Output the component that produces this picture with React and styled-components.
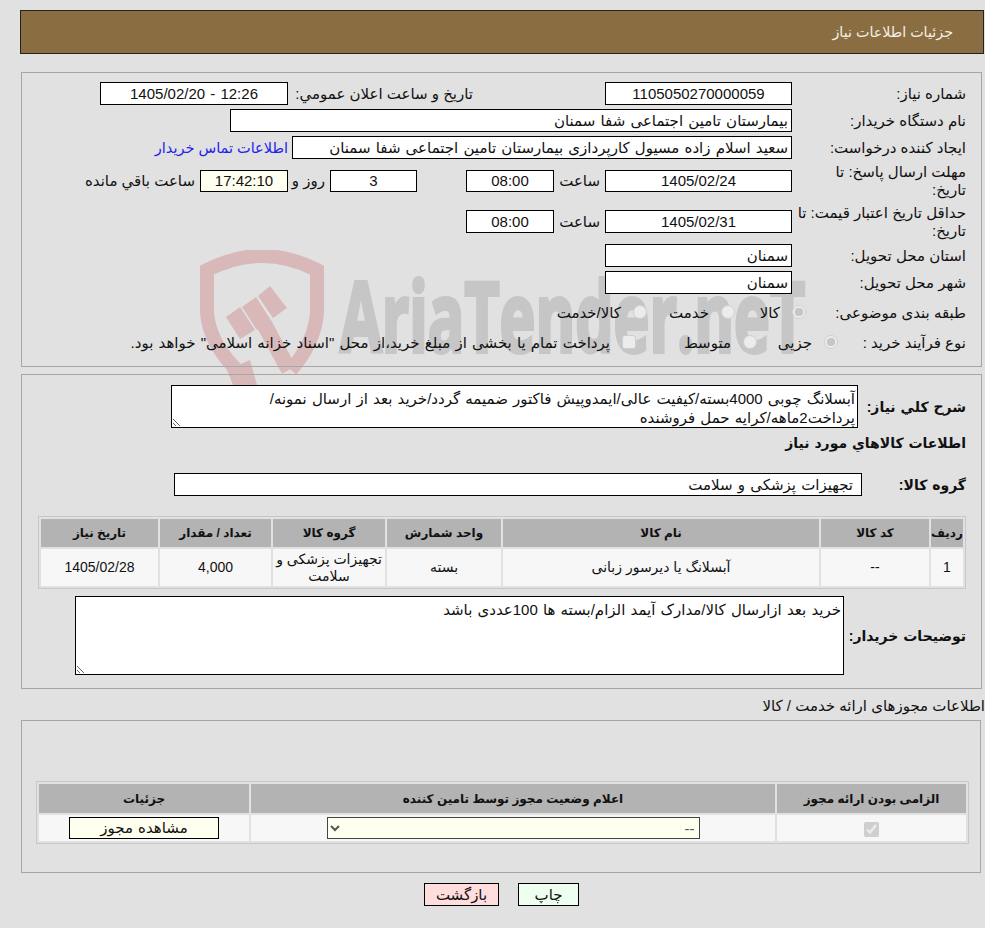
import styled, { createGlobalStyle } from 'styled-components';

const GlobalStyle = createGlobalStyle`
  html, body {
    margin: 0;
    padding: 0;
    background: #e1e1e1;
  }

  body {
    font-family: 'Liberation Sans', 'DejaVu Sans', sans-serif;
    font-size: 15px;
    word-spacing: 1px;
    color: #111;
  }
`;

const columns = [
  { title: 'ردیف', width: 32 },
  { title: 'کد کالا', width: 108 },
  { title: 'نام کالا', width: 316 },
  { title: 'واحد شمارش', width: 114 },
  { title: 'گروه کالا', width: 112 },
  { title: 'تعداد / مقدار', width: 111 },
  { title: 'تاریخ نیاز', width: 117 },
];

const row = ['1', '--', 'آبسلانگ یا دیرسور زبانی', 'بسته', 'تجهیزات پزشکی و سلامت', '4,000', '1405/02/28'];

const Watermark = () => (
  <WatermarkSvg width="640" height="145" viewBox="0 0 640 145">
    <g fill="none" stroke="#d9b8ba">
      <path d="M42 125 Q9 95 7 62 L7 20 Q62 -8 117 20 L117 62 Q115 92 91 120" strokeWidth="14" />
      <path d="M64 74 L89 120" strokeWidth="16" />
    </g>
    <g fill="#d9b8ba">
      <path d="M26 67 L40 57 L55 80 L40 89 Z" />
      <path d="M42 57 L56 47 L72 72 L57 80 Z" />
      <path d="M58 46 L70 36 L87 58 L73 68 Z" />
      <path d="M27 120 L50 110 L57 135 L33 135 Z" />
    </g>
    <text x="140" y="102" fontFamily="'Open Sans', sans-serif" fontWeight="700" fontSize="96" fill="#c6c6c6" stroke="#c6c6c6" strokeWidth="4" textLength="465" lengthAdjust="spacingAndGlyphs">
      AriaTender.neT
    </text>
  </WatermarkSvg>
);

const App = () => {
  return (
    <Page dir="rtl">
      <GlobalStyle />
      <Watermark />
      <Header>جزئیات اطلاعات نیاز</Header>

      <InfoPanel>
        <Row>
          <Label>شماره نیاز:</Label>
          <Box $width={187} $center>1105050270000059</Box>
          <Label $width={180} $before={132} $after={5} $nowrap>تاریخ و ساعت اعلان عمومي:</Label>
          <Box $width={188} $center>12:26 - 1405/02/20</Box>
        </Row>
        <Row>
          <Label>نام دستگاه خریدار:</Label>
          <Box $width={562}>بیمارستان تامین اجتماعی شفا سمنان</Box>
        </Row>
        <Row>
          <Label>ایجاد کننده درخواست:</Label>
          <Box $width={500}>سعید اسلام زاده مسیول کارپردازی بیمارستان تامین اجتماعی شفا سمنان</Box>
          <ContactLink href="#">اطلاعات تماس خریدار</ContactLink>
        </Row>
        <Row $height={36}>
          <Label>مهلت ارسال پاسخ: تا<br />تاریخ:</Label>
          <Box $width={187} $center $short>1405/02/24</Box>
          <Unit $width={51}>ساعت</Unit>
          <Box $width={88} $center $short>08:00</Box>
          <Box $width={87} $center $short $before={49}>3</Box>
          <Unit $width={42}>روز و</Unit>
          <Box $width={88} $center $short $cream>17:42:10</Box>
          <Unit>ساعت باقي مانده</Unit>
        </Row>
        <Row $height={37}>
          <Label>حداقل تاریخ اعتبار قیمت: تا<br />تاریخ:</Label>
          <Box $width={187} $center>1405/02/31</Box>
          <Unit $width={51}>ساعت</Unit>
          <Box $width={88} $center>08:00</Box>
        </Row>
        <Row>
          <Label>استان محل تحویل:</Label>
          <Box $width={187}>سمنان</Box>
        </Row>
        <Row>
          <Label>شهر محل تحویل:</Label>
          <Box $width={187}>سمنان</Box>
        </Row>
        <OptionRow>
          <Label>طبقه بندی موضوعی:</Label>
          <Options $offset={-14}>
            <Option $width={71}><Radio type="radio" name="kind" defaultChecked disabled />کالا</Option>
            <Option $width={88}><Radio type="radio" name="kind" disabled />خدمت</Option>
            <Option><Radio type="radio" name="kind" disabled />کالا/خدمت</Option>
          </Options>
        </OptionRow>
        <OptionRow>
          <Label>نوع فرآیند خرید :</Label>
          <Options $offset={-46}>
            <Option $width={81}><Radio type="radio" name="process" defaultChecked disabled />جزیی</Option>
            <Option $width={121}><Radio type="radio" name="process" disabled />متوسط</Option>
            <Option><Radio type="radio" name="process" $square disabled />پرداخت تمام یا بخشی از مبلغ خرید،از محل "اسناد خزانه اسلامی" خواهد بود.</Option>
          </Options>
        </OptionRow>
      </InfoPanel>

      <GoodsPanel>
        <Row $height="auto">
          <BoldLabel $width={108}>شرح كلي نياز:</BoldLabel>
          <Note
            $width={687}
            $height={43}
            readOnly
            defaultValue={'آبسلانگ چوبی 4000بسته/کیفیت عالی/ایمدوپیش فاکتور ضمیمه گردد/خرید بعد از ارسال نمونه/\nپرداخت2ماهه/کرایه حمل فروشنده'}
          />
        </Row>
        <SectionTitle>اطلاعات كالاهاي مورد نياز</SectionTitle>
        <Row>
          <BoldLabel $width={104}>گروه کالا:</BoldLabel>
          <Box $width={688} $inset={8}>تجهیزات پزشکی و سلامت</Box>
        </Row>
        <GoodsTable>
          <colgroup>
            {columns.map((c) => (
              <col key={c.title} style={{ width: c.width }} />
            ))}
          </colgroup>
          <thead>
            <tr>
              {columns.map((c) => (
                <th key={c.title}>{c.title}</th>
              ))}
            </tr>
          </thead>
          <tbody>
            <tr>
              {row.map((value, i) => (
                <td key={i}>{value}</td>
              ))}
            </tr>
          </tbody>
        </GoodsTable>
        <Row $height="auto">
          <BoldLabel $width={122}>توضیحات خریدار:</BoldLabel>
          <Note $width={769} $height={79} readOnly defaultValue="خرید بعد ازارسال کالا/مدارک آیمد الزام/بسته ها 100عددی باشد" />
        </Row>
      </GoodsPanel>

      <PermitTitle>اطلاعات مجوزهای ارائه خدمت / کالا</PermitTitle>

      <PermitPanel>
        <PermitTable>
          <thead>
            <tr>
              <th style={{ width: 189 }}>الزامی بودن ارائه مجوز</th>
              <th>اعلام وضعیت مجوز توسط تامین کننده</th>
              <th style={{ width: 210 }}>جزئیات</th>
            </tr>
          </thead>
          <tbody>
            <tr>
              <td><input type="checkbox" defaultChecked disabled /></td>
              <td>
                <StatusSelect defaultValue="--" disabled>
                  <option>--</option>
                </StatusSelect>
              </td>
              <td><PermitButton type="button">مشاهده مجوز</PermitButton></td>
            </tr>
          </tbody>
        </PermitTable>
      </PermitPanel>

      <Actions>
        <ActionButton type="button" $width={61} $bg="#efffef">چاپ</ActionButton>
        <ActionButton type="button" $width={75} $bg="#ffdddd">بازگشت</ActionButton>
      </Actions>
    </Page>
  );
};

export default App;

const Page = styled.div`
  position: relative;
  height: 928px;
  overflow: hidden;
  padding-top: 10px;
  box-sizing: border-box;
`;

const WatermarkSvg = styled.svg`
  position: absolute;
  left: 200px;
  top: 250px;
  z-index: 0;
  direction: ltr;

  text {
    direction: ltr;
    unicode-bidi: isolate;
    word-spacing: 0;
  }
`;

const Header = styled.div`
  position: relative;
  box-sizing: border-box;
  width: 964px;
  height: 44px;
  margin: 0 1px 0 0;
  padding-right: 30px;
  line-height: 42px;
  font-size: 14.3px;
  word-spacing: 0;
  color: #f4f0e6;
  background: #8b6d42;
  border: 1px solid #222;
`;

const Panel = styled.div`
  position: relative;
  box-sizing: border-box;
  margin: 0 3px 0 0;
  width: 961px;
  border: 1px solid #a6a6a6;
`;

const InfoPanel = styled(Panel)`
  height: 295px;
  margin-top: 18px;
  padding: 9px 15px 0 0;
`;

const GoodsPanel = styled(Panel)`
  height: 315px;
  margin-top: 7px;
  padding: 10px 15px 0 0;
`;

const Row = styled.div`
  display: flex;
  align-items: center;
  height: ${(p) => (typeof p.$height === 'number' ? `${p.$height}px` : p.$height || '23px')};
  margin-bottom: 4px;
`;

const Label = styled.div`
  flex: none;
  box-sizing: border-box;
  width: ${(p) => p.$width || 174}px;
  margin-right: ${(p) => p.$before || 0}px;
  margin-left: ${(p) => p.$after || 0}px;
  line-height: 18px;
  word-spacing: 0;
  white-space: ${(p) => (p.$nowrap ? 'nowrap' : 'normal')};
`;

const BoldLabel = styled.div`
  flex: none;
  width: ${(p) => p.$width}px;
  font-size: 14px;
  font-weight: 700;
  white-space: nowrap;
`;

const Box = styled.div`
  flex: none;
  box-sizing: border-box;
  width: ${(p) => p.$width}px;
  height: ${(p) => (p.$short ? 22 : 23)}px;
  margin-right: ${(p) => p.$before || 0}px;
  padding: 0 ${(p) => p.$inset || 3}px;
  line-height: ${(p) => (p.$short ? 20 : 21)}px;
  white-space: nowrap;
  overflow: hidden;
  text-align: ${(p) => (p.$center ? 'center' : 'right')};
  background: ${(p) => (p.$cream ? '#fffff0' : '#fff')};
  border: 1px solid #000;
`;

const Unit = styled.span`
  flex: none;
  box-sizing: border-box;
  width: ${(p) => (p.$width ? `${p.$width}px` : 'auto')};
  padding-right: 5px;
  word-spacing: 0;
`;

const ContactLink = styled.a`
  margin-right: 4px;
  font-size: 14.5px;
  word-spacing: 0;
  color: #2222ee;
  text-decoration: none;
  white-space: nowrap;
`;

const OptionRow = styled.div`
  display: flex;
  align-items: center;
  height: 30px;
`;

const Options = styled.div`
  display: flex;
  align-items: center;
  margin-right: ${(p) => p.$offset || 0}px;
`;

const Option = styled.label`
  display: flex;
  align-items: center;
  flex: none;
  width: ${(p) => (p.$width ? `${p.$width}px` : 'auto')};
  gap: 12px;
`;

const Radio = styled.input`
  appearance: none;
  box-sizing: border-box;
  flex: none;
  width: 14px;
  height: 14px;
  margin: -3px 0 0;
  background: #ececec;
  border: 1px solid #cfcfcf;
  border-radius: ${(p) => (p.$square ? '3px' : '50%')};

  &:checked {
    background: radial-gradient(circle, #c6c6c6 0 4px, #ececec 4.5px);
  }
`;

const SectionTitle = styled.div`
  height: 41px;
  padding-top: 3px;
  box-sizing: border-box;
  font-size: 14px;
  font-weight: 700;
`;

const Note = styled.textarea`
  flex: none;
  box-sizing: border-box;
  width: ${(p) => p.$width}px;
  height: ${(p) => p.$height}px;
  margin: 0;
  padding: 3px 2px 0;
  font: inherit;
  word-spacing: inherit;
  line-height: 19px;
  color: #111;
  background: #fff;
  border: 1px solid #000;
  border-radius: 0;
  outline: none;
  overflow: hidden;
`;

const GoodsTable = styled.table`
  width: 928px;
  margin: 20px 0 7px;
  table-layout: fixed;
  border: 1px solid #c8c8c8;
  border-spacing: 2px;

  th {
    height: 28px;
    padding: 0;
    font-size: 12px;
    word-spacing: 0;
    background: #b3b3b3;
  }

  td {
    height: 37px;
    padding: 0;
    font-size: 14px;
    word-spacing: 0;
    line-height: 17px;
    text-align: center;
    background: #f7f7f7;
  }
`;

const PermitTitle = styled.div`
  position: relative;
  height: 31px;
  padding-top: 8px;
  box-sizing: border-box;
  word-spacing: 0;
`;

const PermitPanel = styled(Panel)`
  height: 153px;
  width: 960px;
  margin-right: 4px;
  padding: 60px 11px 0 14px;
`;

const PermitTable = styled.table`
  width: 100%;
  table-layout: fixed;
  border: 1px solid #c8c8c8;
  border-spacing: 2px;

  th {
    height: 29px;
    padding: 0;
    font-size: 12px;
    word-spacing: 0;
    background: #b3b3b3;
  }

  td {
    height: 26px;
    padding: 0;
    text-align: center;
    background: #f7f7f7;
  }

  input {
    width: 15px;
    height: 15px;
    margin: 0;
    vertical-align: middle;
  }
`;

const StatusSelect = styled.select`
  display: block;
  box-sizing: border-box;
  width: 373px;
  height: 22px;
  margin: 0 auto;
  font: inherit;
  color: #555;
  background: #fffff0;
  border: 1px solid #444;
  border-radius: 0;
  opacity: 1;
`;

const PermitButton = styled.button`
  display: block;
  box-sizing: border-box;
  width: 150px;
  height: 22px;
  margin: 0 auto;
  padding: 0;
  font: inherit;
  word-spacing: inherit;
  color: #111;
  background: #fffff0;
  border: 1px solid #000;
`;

const Actions = styled.div`
  position: relative;
  display: flex;
  justify-content: center;
  gap: 19px;
  margin-top: 10px;
  padding-left: 18px;
`;

const ActionButton = styled.button`
  box-sizing: border-box;
  width: ${(p) => p.$width}px;
  height: 23px;
  padding: 0;
  font: inherit;
  color: #111;
  background: ${(p) => p.$bg};
  border: 1px solid #000;
`;
